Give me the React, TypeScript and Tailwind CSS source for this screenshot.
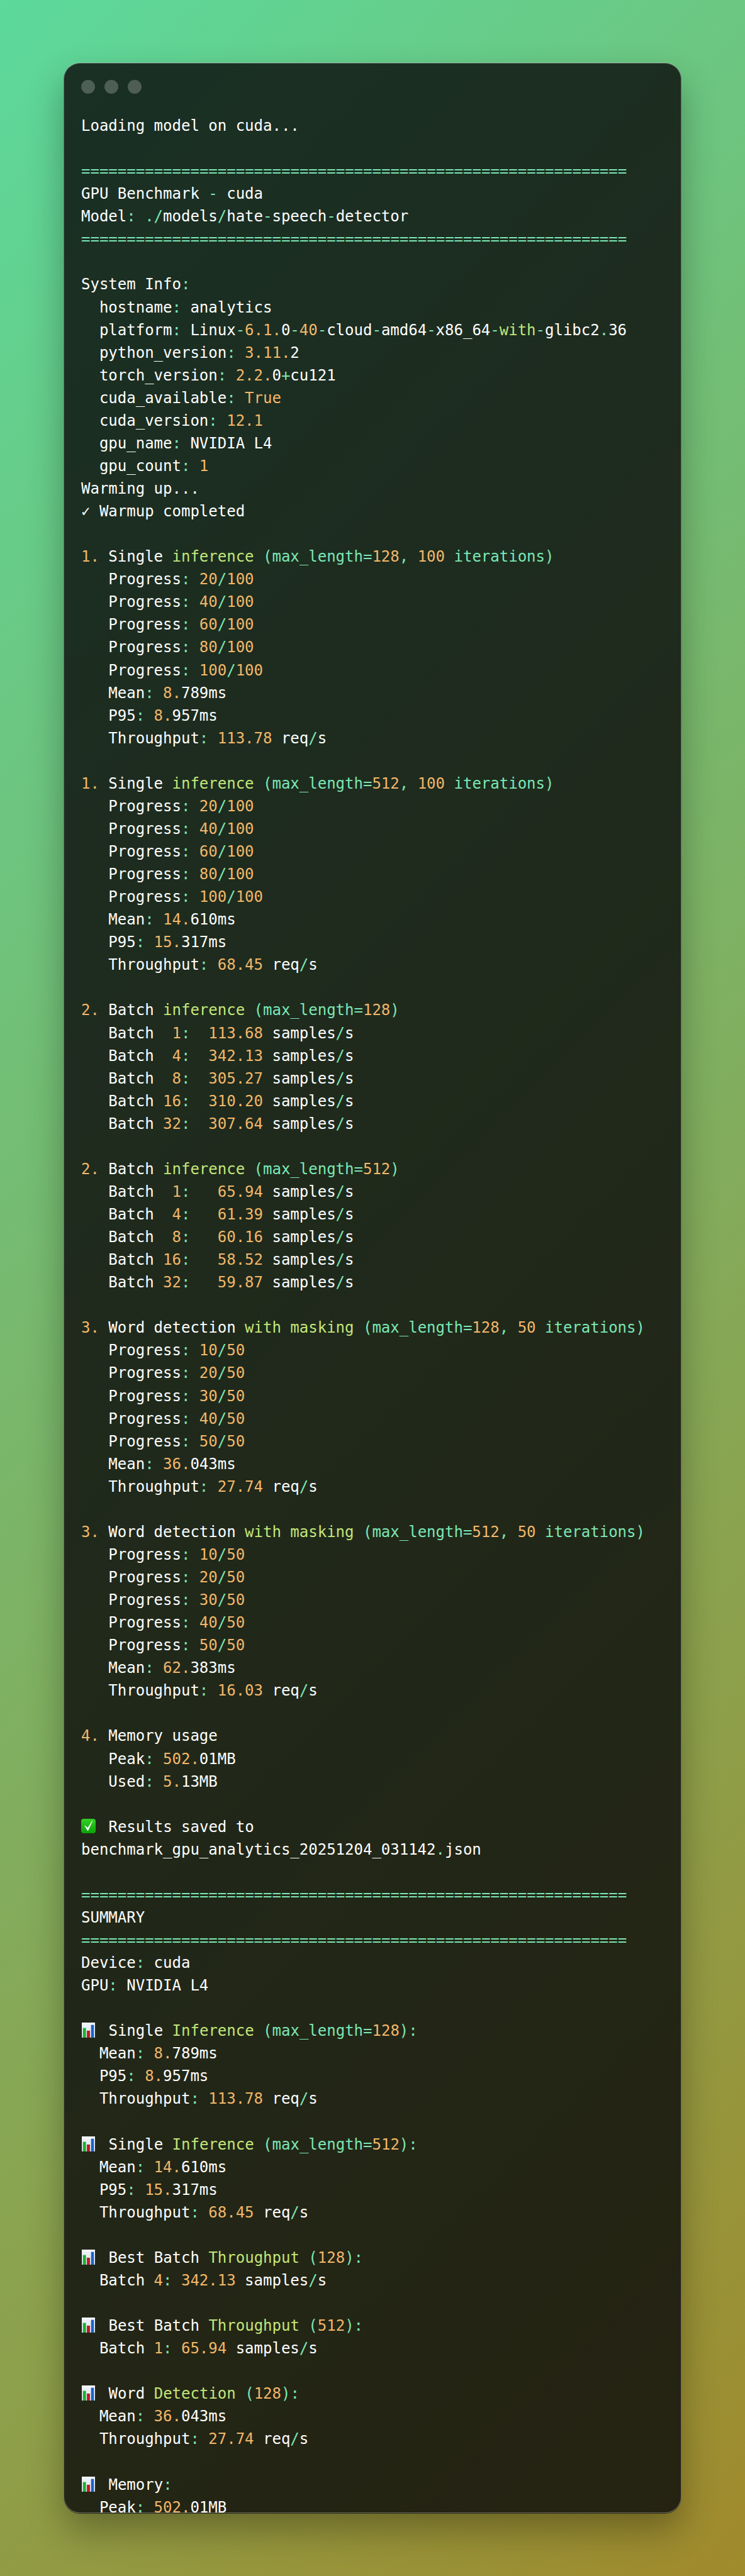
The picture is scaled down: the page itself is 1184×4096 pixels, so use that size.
import React from "react";

const sep = "=".repeat(60);

const progress = (total: number, steps: number[]) =>
  steps.map((s) => `   Progress: ${s}/${total}`);

const batches = (rows: [string, string][]) =>
  rows.map(([b, v]) => `   Batch ${b}:  ${v} samples/s`);

const LINES: string[] = [
  "Loading model on cuda...",
  "",
  sep,
  "GPU Benchmark - cuda",
  "Model: ./models/hate-speech-detector",
  sep,
  "",
  "System Info:",
  "  hostname: analytics",
  "  platform: Linux-6.1.0-40-cloud-amd64-x86_64-with-glibc2.36",
  "  python_version: 3.11.2",
  "  torch_version: 2.2.0+cu121",
  "  cuda_available: True",
  "  cuda_version: 12.1",
  "  gpu_name: NVIDIA L4",
  "  gpu_count: 1",
  "Warming up...",
  "✓ Warmup completed",
  "",
  "1. Single inference (max_length=128, 100 iterations)",
  ...progress(100, [20, 40, 60, 80, 100]),
  "   Mean: 8.789ms",
  "   P95: 8.957ms",
  "   Throughput: 113.78 req/s",
  "",
  "1. Single inference (max_length=512, 100 iterations)",
  ...progress(100, [20, 40, 60, 80, 100]),
  "   Mean: 14.610ms",
  "   P95: 15.317ms",
  "   Throughput: 68.45 req/s",
  "",
  "2. Batch inference (max_length=128)",
  ...batches([[" 1", "113.68"], [" 4", "342.13"], [" 8", "305.27"], ["16", "310.20"], ["32", "307.64"]]),
  "",
  "2. Batch inference (max_length=512)",
  ...batches([[" 1", " 65.94"], [" 4", " 61.39"], [" 8", " 60.16"], ["16", " 58.52"], ["32", " 59.87"]]),
  "",
  "3. Word detection with masking (max_length=128, 50 iterations)",
  ...progress(50, [10, 20, 30, 40, 50]),
  "   Mean: 36.043ms",
  "   Throughput: 27.74 req/s",
  "",
  "3. Word detection with masking (max_length=512, 50 iterations)",
  ...progress(50, [10, 20, 30, 40, 50]),
  "   Mean: 62.383ms",
  "   Throughput: 16.03 req/s",
  "",
  "4. Memory usage",
  "   Peak: 502.01MB",
  "   Used: 5.13MB",
  "",
  "@check Results saved to",
  "benchmark_gpu_analytics_20251204_031142.json",
  "",
  sep,
  "SUMMARY",
  sep,
  "Device: cuda",
  "GPU: NVIDIA L4",
  "",
  "@chart Single Inference (max_length=128):",
  "  Mean: 8.789ms",
  "  P95: 8.957ms",
  "  Throughput: 113.78 req/s",
  "",
  "@chart Single Inference (max_length=512):",
  "  Mean: 14.610ms",
  "  P95: 15.317ms",
  "  Throughput: 68.45 req/s",
  "",
  "@chart Best Batch Throughput (128):",
  "  Batch 4: 342.13 samples/s",
  "",
  "@chart Best Batch Throughput (512):",
  "  Batch 1: 65.94 samples/s",
  "",
  "@chart Word Detection (128):",
  "  Mean: 36.043ms",
  "  Throughput: 27.74 req/s",
  "",
  "@chart Memory:",
  "  Peak: 502.01MB",
];

const GREEN = "text-[#7ce7b5]";
const ORANGE = "text-[#f2b769]";
const LIME = "text-[#c3e67a]";

const TOKEN = new RegExp(
  [
    "(\\.\\.\\.)", // plain ellipsis stays white
    "(\\(max_length|iterations)",
    // numbers: the theme stops colouring before the last part when letters or a patch number follow
    "((?<![\\w.])(?:\\d+\\.\\d+\\.(?=\\d)|\\d+\\.(?=\\d+[a-zA-Z])|\\d+\\.\\d+(?!\\w)|\\d+\\.(?=\\s)|\\d+(?![\\w.]))|True)",
    "([=:/\\-+)(,.])",
    "(inference|Inference|with|masking|Detection|(?<=Batch )Throughput)",
  ].join("|"),
  "g"
);

function tokens(line: string) {
  const out: { t: string; c?: string }[] = [];
  let last = 0;
  for (const m of line.matchAll(TOKEN)) {
    const at = m.index ?? 0;
    if (at > last) out.push({ t: line.slice(last, at) });
    if (m[1]) out.push({ t: m[1] });
    else if (m[2] || m[4]) out.push({ t: m[0], c: GREEN });
    else if (m[3]) out.push({ t: m[0], c: ORANGE });
    else out.push({ t: m[0], c: LIME });
    last = at + m[0].length;
  }
  if (last < line.length) out.push({ t: line.slice(last) });
  return out;
}

function CheckEmoji() {
  return (
    <svg viewBox="0 0 26 26" className="mr-[6px] inline-block h-[23px] w-[23px] align-[-2px]">
      <defs>
        <linearGradient id="checkFill" x1="0" y1="0" x2="0" y2="1">
          <stop offset="0" stopColor="#35cf25" />
          <stop offset="1" stopColor="#0aa30a" />
        </linearGradient>
      </defs>
      <rect width="26" height="26" rx="4.5" fill="url(#checkFill)" />
      <path d="M6.5 12.5l5.5 9 8-17.5-8 12.5z" fill="#fff" stroke="#fff" strokeWidth="1" strokeLinejoin="round" />
    </svg>
  );
}

function ChartEmoji() {
  return (
    <svg viewBox="0 0 70 78" preserveAspectRatio="none" className="mr-[7px] ml-[1px] inline-block h-[24px] w-[21px] align-[-3px]">
      <defs>
        <linearGradient id="chartFill" x1="0" y1="0" x2="0" y2="1">
          <stop offset="0" stopColor="#f4f7fb" />
          <stop offset="1" stopColor="#d5deea" />
        </linearGradient>
      </defs>
      <rect width="70" height="78" fill="url(#chartFill)" />
      <rect x="6" y="28" width="16" height="50" fill="#17b32b" />
      <rect x="27" y="42" width="16" height="36" fill="#c4161c" />
      <rect x="49" y="12" width="15" height="66" fill="#1c62c4" />
    </svg>
  );
}

function Line({ text }: { text: string }) {
  let body = text;
  let icon: React.ReactNode = null;
  if (text.startsWith("@check ")) {
    icon = <CheckEmoji />;
    body = " " + text.slice(7);
  } else if (text.startsWith("@chart ")) {
    icon = <ChartEmoji />;
    body = " " + text.slice(7);
  }
  return (
    <div className="h-[36.075px] whitespace-pre">
      {icon}
      {tokens(body).map((p, i) => (
        <span key={i} className={p.c}>{p.t}</span>
      ))}
    </div>
  );
}

export default function App() {
  return (
    <div className="h-[4096px] w-[1184px] overflow-hidden bg-[linear-gradient(135deg,#5cd99b_0%,#a08a2c_100%)] px-[101px] py-[100px]">
      <div className="h-[3896px] overflow-hidden rounded-[26px] border border-[#ffffff50] bg-[#0b0b0bd1] px-[27px] pt-[26px] shadow-[0_-1px_0_rgba(255,255,255,0.18),0_1px_0_rgba(0,0,0,0.6),0_28px_56px_rgba(0,0,0,0.3)]">
        <div className="mb-[33px] flex gap-[15px]">
          <span className="h-[22px] w-[22px] rounded-full bg-[#ffffff3a]" />
          <span className="h-[22px] w-[22px] rounded-full bg-[#ffffff3a]" />
          <span className="h-[22px] w-[22px] rounded-full bg-[#ffffff3a]" />
        </div>
        <div className="font-['DejaVu_Sans_Mono',monospace] text-[24px] leading-[36.075px] text-white">
          {LINES.map((l, i) => (
            <Line key={i} text={l} />
          ))}
        </div>
      </div>
    </div>
  );
}
